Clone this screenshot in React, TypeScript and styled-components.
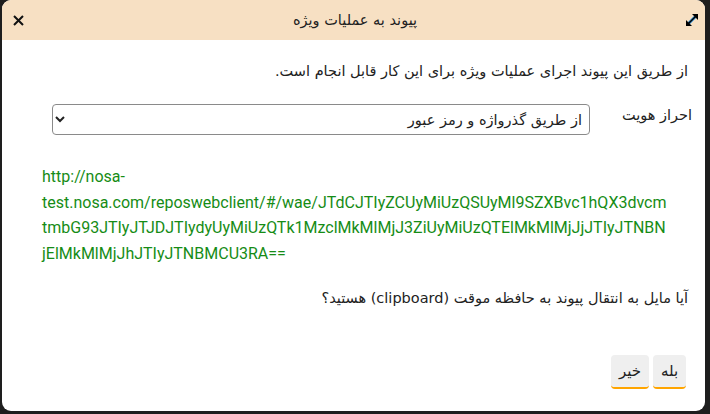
import React from 'react';
import styled, {createGlobalStyle} from 'styled-components';

const Global = createGlobalStyle`
  html, body {
    margin: 0;
    padding: 0;
    background: #1e1e1e;
  }
  body {
    font-family: "DejaVu Sans", "Noto Sans", sans-serif;
  }
`;

const Screen = styled.div`
  width: 710px;
  height: 414px;
  padding: 0 5px 3px 2px;
  box-sizing: border-box;
  display: flex;
`;

const Dialog = styled.div`
  flex: 1;
  display: flex;
  flex-direction: column;
  background: #fff;
  border-radius: 9px;
  overflow: hidden;
`;

const Header = styled.div`
  height: 40px;
  background: #f7e0c3;
  display: flex;
  align-items: center;
  justify-content: space-between;
  padding: 0 6px 0 9px;
  flex-shrink: 0;
  > .title {
    font-size: 14.5px;
    color: #222;
  }
`;

const IconButton = styled.span`
  width: 14px;
  height: 14px;
  display: flex;
  align-items: center;
  justify-content: center;
`;

const Body = styled.div`
  flex: 1;
  direction: rtl;
  padding: 21px 17px 0 40px;
  display: flex;
  flex-direction: column;
  color: #222;
  font-size: 14.5px;
`;

const Para = styled.p`
  margin: 0;
  line-height: 20px;
`;

const Row = styled.div`
  display: flex;
  align-items: flex-start;
  gap: 6px;
  margin-top: 23px;
  margin-right: -4px;
  padding-left: 10px;
  > label {
    width: 96px;
    padding-top: 3px;
    white-space: nowrap;
  }
`;

const Select = styled.select`
  flex: 1;
  height: 31px;
  border: 1px solid #8a8a8a;
  border-radius: 4px;
  background: #fff;
  font-family: inherit;
  font-size: 14.5px;
  color: #222;
  padding: 0 3px;
`;

const Link = styled.div`
  direction: ltr;
  margin-top: 29px;
  font-family: Roboto, "Liberation Sans", sans-serif;
  font-size: 16px;
  line-height: 25.5px;
  color: #168c16;
  padding-right: 2px;
  > span {
    display: block;
    white-space: nowrap;
  }
`;

const Question = styled.p`
  margin: 22px 0 0;
  line-height: 20px;
`;

const Actions = styled.div`
  margin-top: auto;
  margin-bottom: 22px;
  display: flex;
  gap: 4px;
  margin-right: 2px;
`;

const Button = styled.button<{$wide?: boolean}>`
  height: 34px;
  padding: 0 6px;
  min-width: ${p => (p.$wide ? '38px' : '33px')};
  border: none;
  border-bottom: 2px solid #ffa500;
  border-radius: 4px;
  background: #efefef;
  font-family: inherit;
  font-size: 15px;
  color: #222;
`;

const CloseIcon = () => (
  <svg width="11" height="11" viewBox="0 0 11 11">
    <path d="M1 1 L10 10 M10 1 L1 10" stroke="#111" strokeWidth="2" />
  </svg>
);

const ExpandIcon = () => (
  <svg width="14" height="14" viewBox="0 0 14 14">
    <path d="M3 11 L11 3" stroke="#2b8fd8" strokeWidth="3" />
    <path d="M3 11 L11 3" stroke="#000" strokeWidth="1.5" />
    <path d="M7 1 L13 1 L13 7 Z" fill="#000" />
    <path d="M1 7 L1 13 L7 13 Z" fill="#000" />
  </svg>
);

export default function App() {
  return (
    <>
      <Global/>
      <Screen>
        <Dialog>
          <Header>
            <IconButton><CloseIcon/></IconButton>
            <span className="title">پیوند به عملیات ویژه</span>
            <IconButton><ExpandIcon/></IconButton>
          </Header>
          <Body>
            <Para>از طریق این پیوند اجرای عملیات ویژه برای این کار قابل انجام است.</Para>
            <Row>
              <label>احراز هویت</label>
              <Select defaultValue="pwd">
                <option value="pwd">از طریق گذرواژه و رمز عبور</option>
              </Select>
            </Row>
            <Link>
              <span>http://nosa-</span>
              <span>test.nosa.com/reposwebclient/#/wae/JTdCJTIyZCUyMiUzQSUyMl9SZXBvc1hQX3dvcm</span>
              <span>tmbG93JTIyJTJDJTIydyUyMiUzQTk1MzclMkMlMjJ3ZiUyMiUzQTElMkMlMjJjJTIyJTNBN</span>
              <span>jElMkMlMjJhJTIyJTNBMCU3RA==</span>
            </Link>
            <Question>آیا مایل به انتقال پیوند به حافظه موقت (clipboard) هستید؟</Question>
            <Actions>
              <Button>بله</Button>
              <Button $wide>خیر</Button>
            </Actions>
          </Body>
        </Dialog>
      </Screen>
    </>
  );
}
